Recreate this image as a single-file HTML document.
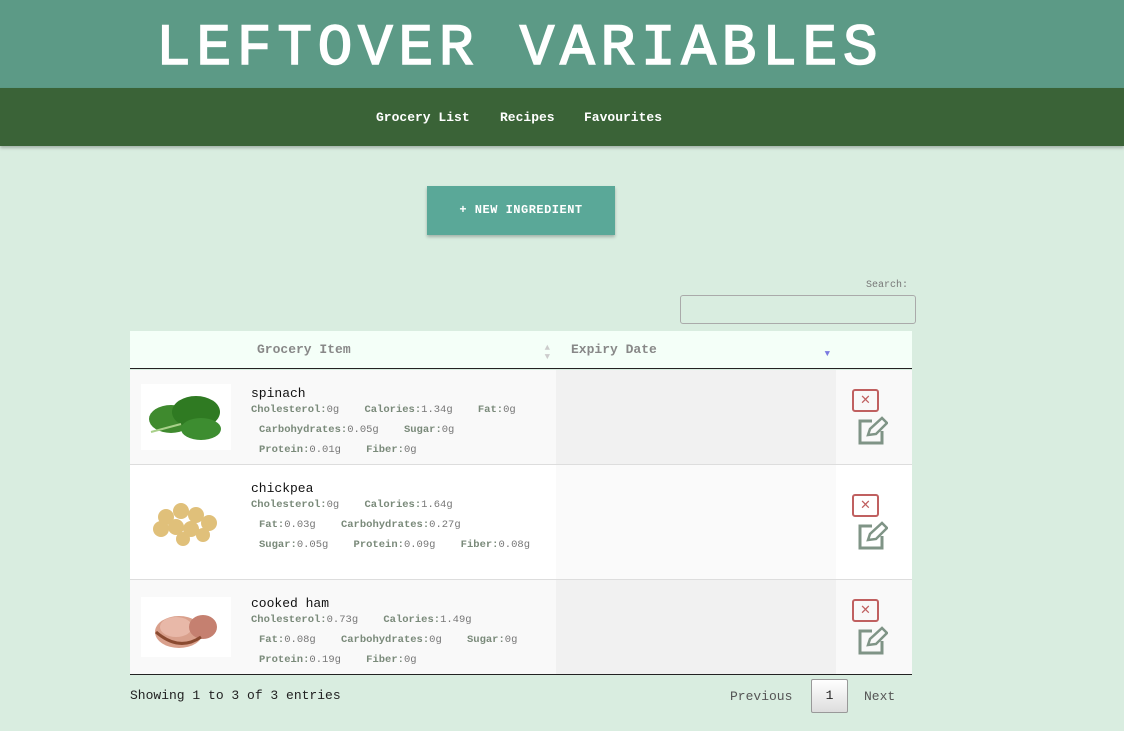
<!DOCTYPE html>
<html><head><style>
*{box-sizing:border-box}
body{margin:0;width:1124px;height:731px;background:#d9ede0;font-family:"Liberation Mono",monospace;overflow:hidden;position:relative}
.hdr{position:absolute;left:0;top:0;width:1124px;height:88px;background:#5c9a86}
.hdr h1{position:absolute;left:156px;top:15px;margin:0;color:#fff;font-size:58px;font-weight:normal;letter-spacing:5.6px;line-height:70px;font-family:"Liberation Mono",monospace;-webkit-text-stroke:1.5px #fff;white-space:nowrap}
.nav{position:absolute;left:0;top:88px;width:1124px;height:58px;background:#3a6337;box-shadow:0 2px 3px rgba(0,0,0,.25)}
.nav span{position:absolute;top:22px;color:#fff;font-size:13px;font-weight:bold}
.btn{position:absolute;left:427px;top:186px;width:188px;height:49px;background:#5aa898;color:#fff;font-size:12px;font-weight:bold;text-align:center;line-height:49px;box-shadow:0 2px 3px rgba(0,0,0,.25);letter-spacing:.5px}
.slbl{position:absolute;left:866px;top:280px;font-size:10px;color:#777}
.sin{position:absolute;left:680px;top:295px;width:236px;height:29px;border:1px solid #aaa;border-radius:3px}
.tbl{position:absolute;left:130px;top:331px;width:782px}
.th{position:absolute;top:0;height:38px;background:#f4fff8;font-size:13px;font-weight:bold;color:#888;line-height:38px;border-bottom:1px solid #222}
.row{position:absolute;left:0;width:782px;border-bottom:1px solid #ddd}
.cell{position:absolute;top:0;height:100%}
.name{position:absolute;left:121px;top:16px;font-size:13px;color:#111}
.nut{position:absolute;font-size:10.5px;color:#777;white-space:nowrap}
.nut b{color:#7a8a7a}
.x{position:absolute;left:16px;width:27px;height:23px;border:2px solid #c06060;border-radius:3px;color:#c06060;font-weight:bold;font-size:16px;line-height:18px;text-align:center}
.ed{position:absolute}
</style></head><body>
<div class="hdr"><h1>LEFTOVER VARIABLES</h1></div>
<div class="nav"><span style="left:376px">Grocery List</span><span style="left:500px">Recipes</span><span style="left:584px">Favourites</span></div>
<div class="btn">+ NEW INGREDIENT</div>
<div class="slbl">Search:</div><div class="sin"></div>
<div class="tbl">
<div class="th" style="left:0;width:112px"></div>
<div class="th" style="left:112px;width:314px;padding-left:15px">Grocery Item<span style="position:absolute;right:6px;color:#ccc;font-size:9px;line-height:9px;top:13px">▲<br>▼</span></div>
<div class="th" style="left:426px;width:280px;padding-left:15px">Expiry Date<span style="position:absolute;right:6px;color:#7a7ae0;font-size:9px;top:4px">▼</span></div>
<div class="th" style="left:706px;width:76px"></div>

<div class="row" style="top:39px;height:95px;background:#f9f9f9">
<div class="cell" style="left:426px;width:280px;background:#f1f1f1"></div>
<svg style="position:absolute;left:11px;top:14px" width="90" height="66"><rect width="90" height="66" fill="#fff"/><ellipse cx="30" cy="35" rx="22" ry="14" fill="#3f8a2e"/><ellipse cx="55" cy="28" rx="24" ry="16" fill="#2f7a22"/><ellipse cx="60" cy="45" rx="20" ry="11" fill="#3d8d30"/><path d="M10 48 L40 40" stroke="#a8d08a" stroke-width="2"/></svg>
<div class="name">spinach</div>
<div class="nut" style="left:121px;top:34px"><b>Cholesterol:</b>0g &nbsp;&nbsp;&nbsp;<b>Calories:</b>1.34g &nbsp;&nbsp;&nbsp;<b>Fat:</b>0g</div>
<div class="nut" style="left:129px;top:54px"><b>Carbohydrates:</b>0.05g &nbsp;&nbsp;&nbsp;<b>Sugar:</b>0g</div>
<div class="nut" style="left:129px;top:74px"><b>Protein:</b>0.01g &nbsp;&nbsp;&nbsp;<b>Fiber:</b>0g</div>
<div class="cell" style="left:706px;width:76px"><div class="x" style="top:19px">✕</div>
<svg class="ed" style="top:46px;left:20px" width="32" height="30" viewBox="0 0 32 30"><path d="M16 5H4v22h22V15" fill="none" stroke="#7f9486" stroke-width="3"/><path d="M12 19l2-6L26 2l5 5-11 11z" fill="none" stroke="#7f9486" stroke-width="2.5"/></svg></div>
</div>

<div class="row" style="top:134px;height:115px;background:#fff">
<div class="cell" style="left:426px;width:280px;background:#fafafa"></div>
<svg style="position:absolute;left:11px;top:22px" width="90" height="66"><rect width="90" height="66" fill="#fff"/><g fill="#e0c07a"><circle cx="25" cy="30" r="8"/><circle cx="40" cy="24" r="8"/><circle cx="55" cy="28" r="8"/><circle cx="68" cy="36" r="8"/><circle cx="20" cy="42" r="8"/><circle cx="35" cy="40" r="8"/><circle cx="50" cy="42" r="8"/><circle cx="62" cy="48" r="7"/><circle cx="42" cy="52" r="7"/></g></svg>
<div class="name">chickpea</div>
<div class="nut" style="left:121px;top:34px"><b>Cholesterol:</b>0g &nbsp;&nbsp;&nbsp;<b>Calories:</b>1.64g</div>
<div class="nut" style="left:129px;top:54px"><b>Fat:</b>0.03g &nbsp;&nbsp;&nbsp;<b>Carbohydrates:</b>0.27g</div>
<div class="nut" style="left:129px;top:74px"><b>Sugar:</b>0.05g &nbsp;&nbsp;&nbsp;<b>Protein:</b>0.09g &nbsp;&nbsp;&nbsp;<b>Fiber:</b>0.08g</div>
<div class="cell" style="left:706px;width:76px"><div class="x" style="top:29px">✕</div>
<svg class="ed" style="top:56px;left:20px" width="32" height="30" viewBox="0 0 32 30"><path d="M16 5H4v22h22V15" fill="none" stroke="#7f9486" stroke-width="3"/><path d="M12 19l2-6L26 2l5 5-11 11z" fill="none" stroke="#7f9486" stroke-width="2.5"/></svg></div>
</div>

<div class="row" style="top:249px;height:95px;background:#f9f9f9;border-bottom:1px solid #222">
<div class="cell" style="left:426px;width:280px;background:#f1f1f1"></div>
<svg style="position:absolute;left:11px;top:17px" width="90" height="60"><rect width="90" height="60" fill="#fff"/><ellipse cx="38" cy="35" rx="24" ry="16" fill="#d9a08c"/><ellipse cx="35" cy="30" rx="16" ry="10" fill="#e8b8a8"/><ellipse cx="62" cy="30" rx="14" ry="12" fill="#c58070"/><path d="M15 35 Q38 55 60 40" stroke="#8a4a30" stroke-width="3" fill="none"/></svg>
<div class="name">cooked ham</div>
<div class="nut" style="left:121px;top:34px"><b>Cholesterol:</b>0.73g &nbsp;&nbsp;&nbsp;<b>Calories:</b>1.49g</div>
<div class="nut" style="left:129px;top:54px"><b>Fat:</b>0.08g &nbsp;&nbsp;&nbsp;<b>Carbohydrates:</b>0g &nbsp;&nbsp;&nbsp;<b>Sugar:</b>0g</div>
<div class="nut" style="left:129px;top:74px"><b>Protein:</b>0.19g &nbsp;&nbsp;&nbsp;<b>Fiber:</b>0g</div>
<div class="cell" style="left:706px;width:76px"><div class="x" style="top:19px">✕</div>
<svg class="ed" style="top:46px;left:20px" width="32" height="30" viewBox="0 0 32 30"><path d="M16 5H4v22h22V15" fill="none" stroke="#7f9486" stroke-width="3"/><path d="M12 19l2-6L26 2l5 5-11 11z" fill="none" stroke="#7f9486" stroke-width="2.5"/></svg></div>
</div>
</div>
<div style="position:absolute;left:130px;top:688px;font-size:13px;color:#222">Showing 1 to 3 of 3 entries</div>
<div style="position:absolute;left:730px;top:689px;font-size:13px;color:#555">Previous</div>
<div style="position:absolute;left:811px;top:679px;width:37px;height:34px;border:1px solid #999;border-radius:2px;background:linear-gradient(#fff,#ddd);font-size:13px;text-align:center;line-height:32px;color:#222">1</div>
<div style="position:absolute;left:864px;top:689px;font-size:13px;color:#555">Next</div>
</body></html>
